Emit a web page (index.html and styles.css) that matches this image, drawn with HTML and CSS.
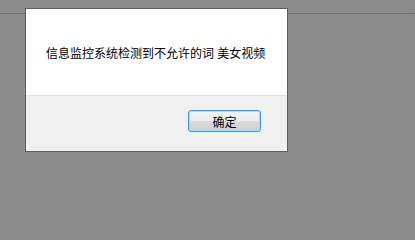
FILE: index.html
```html
<!DOCTYPE html>
<html lang="zh">
<head>
<meta charset="utf-8">
<link rel="stylesheet" href="styles.css">
</head>
<body>
<div class="page">
  <div class="page-rule"></div>
</div>
<div class="dialog">
  <div class="dialog-body">
    <p class="message">信息监控系统检测到不允许的词 美女视频</p>
  </div>
  <div class="dialog-footer">
    <button class="btn">确定</button>
  </div>
</div>
</body>
</html>
```
FILE: styles.css
```css
html, body {
  margin: 0;
  padding: 0;
  width: 415px;
  height: 214px;
  overflow: hidden;
}
body {
  background-color: #8b8b8b;
  background-image: conic-gradient(#878787 25%, #909090 0 50%, #878787 0 75%, #909090 0);
  background-size: 2px 2px;
  font-family: "Liberation Sans", "Noto Sans CJK SC", sans-serif;
  position: relative;
}
.page {
  padding-top: 13px;
}
.page-rule {
  height: 1px;
  background: #6e6e6e;
}
.dialog {
  position: absolute;
  left: 25px;
  top: 8px;
  width: 261px;
  height: 142px;
  border: 1px solid #5e5e5e;
  display: flex;
  flex-direction: column;
  background: #fff;
}
.dialog-body {
  height: 86px;
  display: flex;
  align-items: center;
  padding-left: 20px;
}
.message {
  margin: 0;
  font-size: 12px;
  color: #000;
  letter-spacing: 0;
}
.dialog-footer {
  flex: 1;
  background: #f0f0f0;
  border-top: 1px solid #dfdfdf;
  display: flex;
  justify-content: flex-end;
  align-items: flex-start;
  padding: 14px 26px 0 0;
}
.btn {
  width: 73px;
  height: 22px;
  margin: 0;
  padding: 0;
  border: 1px solid #3c9ad6;
  border-radius: 3px;
  box-shadow: inset 0 0 0 1px #9fe0f7;
  background: linear-gradient(#f4f4f4 0, #ebebeb 50%, #dcdcdc 50%, #cfcfcf 100%);
  font-family: "Liberation Sans", "Noto Sans CJK SC", sans-serif;
  font-size: 12px;
  color: #000;
}
```
